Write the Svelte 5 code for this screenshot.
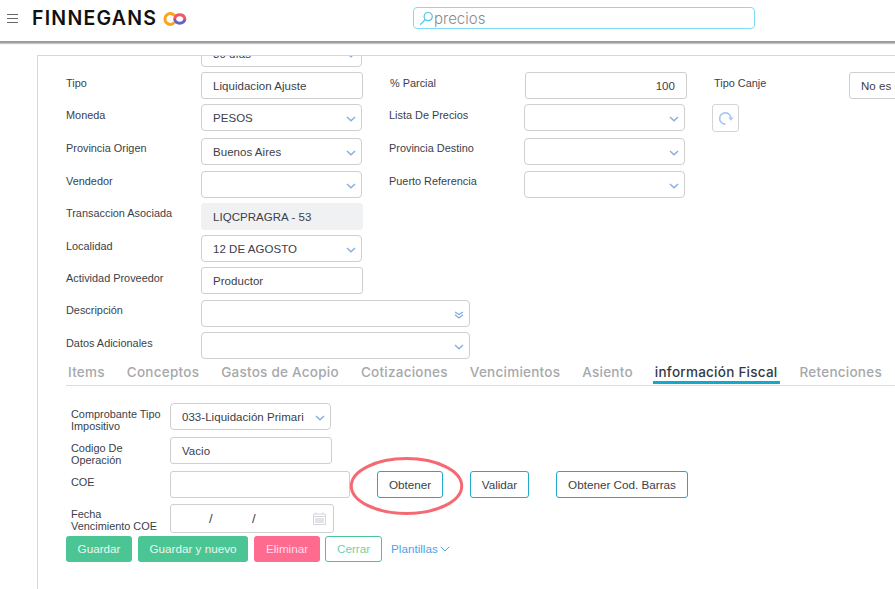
<script>
  const topRows = [
    { label: 'Tipo', value: 'Liquidacion Ajuste', kind: 'text' },
    { label: 'Moneda', value: 'PESOS', kind: 'select' },
    { label: 'Provincia Origen', value: 'Buenos Aires', kind: 'select' },
    { label: 'Vendedor', value: '', kind: 'select' },
    { label: 'Transaccion Asociada', value: 'LIQCPRAGRA - 53', kind: 'readonly' },
    { label: 'Localidad', value: '12 DE AGOSTO', kind: 'select' },
    { label: 'Actividad Proveedor', value: 'Productor', kind: 'text' }
  ];
  const sideRows = [
    { label: '% Parcial', value: '100', kind: 'number' },
    { label: 'Lista De Precios', value: '', kind: 'select' },
    { label: 'Provincia Destino', value: '', kind: 'select' },
    { label: 'Puerto Referencia', value: '', kind: 'select' }
  ];
  const tabs = ['Items', 'Conceptos', 'Gastos de Acopio', 'Cotizaciones', 'Vencimientos', 'Asiento', 'información Fiscal', 'Retenciones'];
</script>

{#snippet chevron()}
  <svg class="chev" width="10" height="6" viewBox="0 0 10 6"><path d="M1 1 5 4.800 9 1" fill="none" stroke="#86aedd" stroke-width="1.400"/></svg>
{/snippet}

{#snippet field(row)}
  <div class="field {row.kind}">
    <span>{row.value}</span>
    {#if row.kind === 'select'}{@render chevron()}{/if}
  </div>
{/snippet}

<header>
  <button class="burger" aria-label="menu"><i></i><i></i><i></i></button>
  <div class="logo">FINNEGANS</div>
  <svg class="mark" width="25" height="16" viewBox="0 0 25 16">
    <path d="M12.500 4.600A5.400 5.400 0 1 0 12.500 11.400" fill="none" stroke="#f9a61a" stroke-width="3"/>
    <path d="M12.500 8A5.400 5.400 0 0 1 23 8" fill="none" stroke="#ef5a6a" stroke-width="3"/>
    <path d="M12.500 8A5.400 5.400 0 0 0 23 8" fill="none" stroke="#6a60c4" stroke-width="3"/>
  </svg>
  <div class="search">
    <svg width="15" height="15" viewBox="0 0 15 15"><circle cx="9.200" cy="5.600" r="4.100" fill="none" stroke="#4fc3e8" stroke-width="1.200"/><path d="M6.200 8.600 1.200 13.600" stroke="#4fc3e8" stroke-width="1.300"/></svg>
    <span>precios</span>
  </div>
</header>

<main>
  <section class="panel">
    <div class="cut"><div class="field select"><span>30 días</span>{@render chevron()}</div></div>

    <div class="form">
      <div class="col-main">
        {#each topRows as row}
          <div class="row">
            <label>{row.label}</label>
            {@render field(row)}
          </div>
        {/each}
      </div>
      <div class="col-side">
        {#each sideRows as row}
          <div class="row">
            <label>{row.label}</label>
            {@render field(row)}
          </div>
        {/each}
      </div>
      <div class="col-extra">
        <div class="row">
          <label>Tipo Canje</label>
          <div class="field text"><span>No es canje</span></div>
        </div>
        <button class="refresh" aria-label="actualizar">
          <svg width="17" height="17" viewBox="0 0 17 17"><path d="M8.500 14.200A5.700 5.700 0 1 1 14 7.800" fill="none" stroke="#a9c8f0" stroke-width="1.700"/><path d="M11.300 7.400h5.200l-2.600 3.400z" fill="#a9c8f0"/></svg>
        </button>
      </div>
    </div>

    <div class="row wide desc">
      <label>Descripción</label>
      <div class="field select long"><span></span><svg class="chev" width="10" height="8" viewBox="0 0 10 8"><path d="M1 1 5 3.600 9 1M1 3.800 5 7 9 3.800" fill="none" stroke="#7fa9dc" stroke-width="1.200"/></svg></div>
    </div>
    <div class="row wide">
      <label>Datos Adicionales</label>
      <div class="field select long"><span></span>{@render chevron()}</div>
    </div>

    <nav>
      {#each tabs as tab}
        <span class="tab" class:active={tab === 'información Fiscal'}>{tab}</span>
      {/each}
    </nav>

    <div class="fiscal">
      <div class="frow">
        <label>Comprobante Tipo Impositivo</label>
        <div class="field select comp"><span>033-Liquidación Primari</span>{@render chevron()}</div>
      </div>
      <div class="frow">
        <label>Codigo De Operación</label>
        <div class="field text"><span>Vacio</span></div>
      </div>
      <div class="frow coe">
        <label>COE</label>
        <div class="field text coe-input"></div>
        <div class="actions">
          <button class="outline obtener">Obtener
            <svg class="ring" width="115" height="60" viewBox="0 0 115 60"><ellipse cx="57.500" cy="30" rx="55.200" ry="27.500" fill="none" stroke="#f56a72" stroke-width="3"/></svg>
          </button>
          <button class="outline validar">Validar</button>
          <button class="outline barras">Obtener Cod. Barras</button>
        </div>
      </div>
      <div class="frow date-row">
        <label>Fecha Vencimiento COE</label>
        <div class="field date">
          <i>/</i><i>/</i>
          <svg width="13" height="13" viewBox="0 0 13 13"><path d="M.5 2h12v10.500H.5zM.5 4.500h12M3 .5v2M10 .5v2" fill="none" stroke="#d4d7da"/><path d="M2 6h9v5H2z" fill="#e2e4e7"/></svg>
        </div>
      </div>
    </div>

    <footer>
      <button class="solid green">Guardar</button>
      <button class="solid green nuevo">Guardar y nuevo</button>
      <button class="solid pink">Eliminar</button>
      <button class="cerrar">Cerrar</button>
      <span class="plantillas">Plantillas
        <svg width="10" height="6" viewBox="0 0 10 6"><path d="M.8.8 5 5 9.200.8" fill="none" stroke="#4ba3ea" stroke-width="1"/></svg>
      </span>
    </footer>
  </section>
</main>

<style>
  :global(body) {
    background: #fff;
    overflow: hidden;
    font-family: "Liberation Sans", Arial, sans-serif;
    height: 589px;
  }
  header {
    height: 41px;
    box-sizing: border-box;
    box-shadow: 0 2px 0 #9b9ea3, 0 3px 1px #c4c6c9;
    display: flex;
    align-items: center;
    background: #fff;
    padding-left: 7px;
    position: relative;
  }
  .burger {
    width: 11px;
    height: 9px;
    padding: 0;
    border: 0;
    background: none;
    display: flex;
    flex-direction: column;
    justify-content: space-between;
    margin-top: -5px;
  }
  .burger i {
    display: block;
    height: 1px;
    background: #666;
  }
  .logo {
    margin-left: 14px;
    font-family: Inter, sans-serif;
    font-weight: 600;
    font-size: 19.500px;
    letter-spacing: 1.250px;
    color: #111;
    margin-top: -5px;
    width: 130px;
  }
  .mark {
    margin: -4px 0 0 0;
  }
  .search {
    box-sizing: border-box;
    margin: -5px 0 0 226px;
    width: 342px;
    height: 22px;
    border: 1px solid #7fdcf5;
    border-radius: 4px;
    display: flex;
    align-items: center;
    padding-left: 5px;
    font-family: Inter, sans-serif;
    font-size: 15px;
    font-weight: 300;
    color: #858b91;
  }
  .search span {
    padding-top: 1px;
  }
  main {
    padding: 14px 0 0 37px;
  }
  .panel {
    border: 1px solid #d8d8d8;
    border-width: 1px 0 0 1px;
    height: 534px;
    padding-left: 28px;
    overflow: hidden;
    box-sizing: border-box;
  }
  label {
    font-size: 10.900px;
    color: #3a3f4a;
    line-height: 12px;
    display: block;
  }
  .cut {
    height: 11px;
    padding-left: 135px;
    display: flex;
    align-items: flex-end;
    margin-bottom: 5px;
  }
  .cut .field {
    flex: none;
    width: 162px;
  }
  .field {
    width: 162px;
    height: 27px;
    box-sizing: border-box;
    border: 1px solid #cfcfcf;
    border-radius: 3px;
    padding: 0 11px;
    font-size: 11.500px;
    letter-spacing: 0.040px;
    color: #3c4048;
    display: flex;
    align-items: center;
    justify-content: space-between;
    background: #fff;
    flex: none;
  }
  .field span {
    padding-top: 1px;
    white-space: nowrap;
  }
  .field.select {
    padding-right: 5px;
    width: 161px;
    border-radius: 4px;
  }
  .chev {
    margin-top: 3px;
    flex: none;
  }
  .field.readonly {
    background: #f0f1f2;
    border-color: #f0f1f2;
  }
  .field.number {
    justify-content: flex-end;
  }
  .form {
    display: grid;
    grid-template-columns: 323px 325px 200px;
  }
  .row {
    display: flex;
    height: 32px;
  }
  .row label {
    width: 135px;
    flex: none;
    padding-top: 5px;
  }
  .col-main .row:nth-child(2), .col-side .row:nth-child(2) {
    height: 34px;
  }
  .col-main .row:nth-child(3), .col-side .row:nth-child(3) {
    height: 33px;
  }
  .col-main .row:nth-child(7) {
    height: 33px;
  }
  .col-main .row:nth-child(3) label, .col-side .row:nth-child(3) label,
  .col-main .row:nth-child(4) label, .col-side .row:nth-child(4) label,
  .col-main .row:nth-child(5) label,
  .desc label {
    padding-top: 4px;
  }
  .col-side .row:first-child {
    margin-left: 1px;
  }
  .refresh {
    width: 27px;
    height: 28px;
    padding: 0;
    margin-left: -2px;
    border: 1px solid #d4d4d4;
    border-radius: 3px;
    background: #fff;
    display: flex;
    align-items: center;
    justify-content: center;
  }
  .wide .field.long {
    width: 269px;
  }
  nav {
    display: flex;
    gap: 22px;
    height: 26px;
    margin-top: -4px;
    box-sizing: border-box;
    border-bottom: 1px solid #dcdcdc;
    padding-left: 2px;
    font-family: Inter, sans-serif;
    font-size: 13.500px;
    letter-spacing: 0.250px;
    font-weight: 500;
    color: #a6a8ab;
    white-space: nowrap;
    margin-right: -40px;
    align-items: flex-start;
    padding-top: 4px;
  }
  .tab {
    position: relative;
  }
  .tab.active {
    color: #333a45;
  }
  .tab.active::after {
    content: "";
    position: absolute;
    left: -2px;
    right: -2px;
    bottom: -4px;
    height: 3px;
    background: #14a9cc;
  }
  .fiscal {
    padding: 17px 0 0 5px;
  }
  .frow {
    display: flex;
    height: 34px;
  }
  .frow label {
    width: 99px;
    flex: none;
    padding-top: 5px;
    color: #3a3f4a;
  }
  .field.comp {
    width: 161px;
    padding-left: 11px;
  }
  .coe-input {
    width: 180px;
  }
  .coe {
    height: 33px;
  }
  .actions {
    display: flex;
    gap: 27px;
  }
  .outline {
    height: 27px;
    border: 1px solid #22a9c9;
    border-radius: 3px;
    background: #fff;
    font: 11.700px "Liberation Sans", Arial, sans-serif;
    color: #3c4048;
    padding: 0;
    white-space: nowrap;
  }
  .obtener {
    width: 66px;
    margin-left: 27px;
    position: relative;
  }
  .validar {
    width: 59px;
  }
  .barras {
    width: 132px;
  }
  .ring {
    position: absolute;
    left: -29px;
    top: -16px;
    pointer-events: none;
  }
  .date-row {
    height: 32px;
  }
  .date-row label {
    padding-right: 10px;
    width: 89px;
    padding-top: 4px;
  }
  .field.date {
    width: 164px;
    height: 29px;
    position: relative;
    justify-content: flex-end;
    padding-right: 7px;
  }
  .field.date i {
    position: absolute;
    top: 6px;
    font-style: normal;
    font-size: 13px;
  }
  .field.date i:nth-of-type(1) { left: 38px; }
  .field.date i:nth-of-type(2) { left: 81px; }
  footer {
    display: flex;
    align-items: center;
    gap: 6px;
  }
  footer button {
    height: 26px;
    font: 11.700px "Liberation Sans", Arial, sans-serif;
    border-radius: 3px;
    border: 0;
    padding: 0 0 2px;
  }
  .solid {
    color: #e9f7f0;
    width: 66px;
  }
  .green { background: #4cc594; }
  .solid.nuevo { width: 110px; }
  .pink { background: #ff6b8e; color: #fde; }
  footer .cerrar {
    width: 57px;
    border: 1px solid #4cc594;
    background: #fff;
    color: #6fd0a8;
    margin-left: -1px;
  }
  .plantillas {
    margin: -2px 0 0 3px;
    font-size: 11.700px;
    color: #4ba3ea;
    display: flex;
    align-items: center;
    gap: 2px;
  }
  .plantillas svg {
    margin-top: 2px;
  }
</style>
